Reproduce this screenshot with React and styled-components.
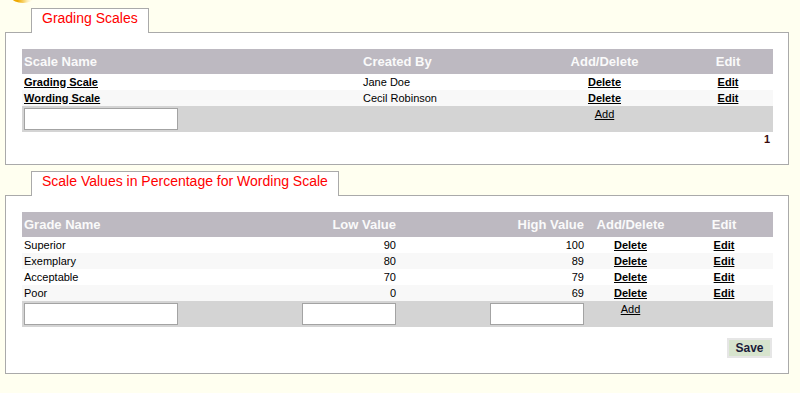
import styled, { createGlobalStyle } from 'styled-components';

const GlobalStyle = createGlobalStyle`
  body {
    margin: 0;
    background: #fffff0;
    font-family: "Liberation Sans", Arial, sans-serif;
  }
`

const Page = styled.div`
  padding: 0 11px 0 5px;
`

const TopStrip = styled.div`
  height: 8px;
  overflow: hidden;
  display: flex;
`

const Section = styled.section`
  margin-top: ${p => p.$gap || 0}px;
`

const TabRow = styled.div`
  display: flex;
  align-items: stretch;
  height: 25px;
`

const TabGap = styled.div`
  width: 26px;
  border-bottom: 1px solid #aaa;
  box-sizing: border-box;
`

const TabFill = styled.div`
  flex: 1;
  border-bottom: 1px solid #aaa;
  box-sizing: border-box;
`

const Tab = styled.div`
  background: #fff;
  border: 1px solid #aaa;
  border-bottom: none;
  padding: 1px 10px 0 10px;
  line-height: 16px;
  font-size: 14px;
  color: #f00;
  white-space: nowrap;
`

const PanelBody = styled.div`
  background: #fff;
  border: 1px solid #aaa;
  border-top: none;
  padding: 16px 15px ${p => p.$bottom}px 16px;
`

const Table = styled.table`
  width: 751px;
  table-layout: fixed;
  border-collapse: collapse;
  font-size: 11px;
  color: #000;
`

const HeadRow = styled.tr`
  background: #bdb9c1;
  height: 25px;
`

const HeadCell = styled.th`
  padding: 0 2px;
  font-size: 13px;
  font-weight: bold;
  color: #fafafa;
  text-align: ${p => p.$align || 'left'};
  vertical-align: middle;
  white-space: nowrap;
`

const Row = styled.tr`
  height: 16px;
  background: ${p => (p.$alt ? '#f8f8f8' : '#fff')};
`

const Cell = styled.td`
  padding: 0 2px;
  line-height: 13px;
  text-align: ${p => p.$align || 'left'};
  vertical-align: middle;
  white-space: nowrap;
`

const AddRow = styled.tr`
  height: 26px;
  background: #d4d4d4;
`

const AddCell = styled.td`
  padding: 2px;
  line-height: 13px;
  text-align: ${p => p.$align || 'left'};
  vertical-align: top;
`

const TextBox = styled.input`
  display: inline-block;
  box-sizing: border-box;
  width: ${p => p.$w}px;
  height: 22px;
  border: 1px solid #a3a3a3;
  background: #fff;
  margin: 0;
  padding: 0 3px;
  vertical-align: top;
`

const LinkText = styled.a`
  color: #000;
  text-decoration: underline;
  font-weight: ${p => (p.$plain ? 'normal' : 'bold')};
  cursor: pointer;
`

const Pager = styled.div`
  padding: 1px 3px 1px 0;
  line-height: 13px;
  font-size: 11px;
  font-weight: bold;
  color: #3a0a0a;
  text-align: right;
`

const ButtonRow = styled.div`
  display: flex;
  justify-content: flex-end;
  margin-top: 11px;
  padding-right: 1px;
`

const SaveButton = styled.button`
  box-sizing: border-box;
  height: 20px;
  width: 45px;
  background: #d7e4cd;
  border: 2px solid #e6e6e6;
  color: #1b1b3a;
  font-family: "Liberation Sans", Arial, sans-serif;
  font-size: 12px;
  font-weight: bold;
  padding: 0;
  cursor: pointer;
`

const scales = [
  { name: 'Grading Scale', by: 'Jane Doe' },
  { name: 'Wording Scale', by: 'Cecil Robinson' },
]

const grades = [
  { name: 'Superior', low: 90, high: 100 },
  { name: 'Exemplary', low: 80, high: 89 },
  { name: 'Acceptable', low: 70, high: 79 },
  { name: 'Poor', low: 0, high: 69 },
]

const Logo = () => (
  <svg width="40" height="8" viewBox="0 0 40 8">
    <defs>
      <linearGradient id="lg" x1="0" y1="0" x2="1" y2="0">
        <stop offset="0.25" stopColor="#efa900" />
        <stop offset="0.6" stopColor="#f9de8a" />
        <stop offset="1" stopColor="#fffff0" stopOpacity="0" />
      </linearGradient>
    </defs>
    <ellipse cx="18" cy="-2" rx="11" ry="5" fill="url(#lg)" />
  </svg>
)

const App = () => {
  return (
    <Page>
      <GlobalStyle />
      <TopStrip>
        <Logo />
      </TopStrip>

      <Section>
        <TabRow>
          <TabGap />
          <Tab>Grading Scales</Tab>
          <TabFill />
        </TabRow>
        <PanelBody $bottom={17}>
          <Table>
            <colgroup>
              <col style={{ width: 339 }} />
              <col style={{ width: 165 }} />
              <col style={{ width: 157 }} />
              <col style={{ width: 90 }} />
            </colgroup>
            <thead>
              <HeadRow>
                <HeadCell>Scale Name</HeadCell>
                <HeadCell>Created By</HeadCell>
                <HeadCell $align="center">Add/Delete</HeadCell>
                <HeadCell $align="center">Edit</HeadCell>
              </HeadRow>
            </thead>
            <tbody>
              {scales.map((s, i) => (
                <Row key={s.name} $alt={i % 2 === 1}>
                  <Cell><LinkText>{s.name}</LinkText></Cell>
                  <Cell>{s.by}</Cell>
                  <Cell $align="center"><LinkText>Delete</LinkText></Cell>
                  <Cell $align="center"><LinkText>Edit</LinkText></Cell>
                </Row>
              ))}
              <AddRow>
                <AddCell><TextBox $w={154} /></AddCell>
                <AddCell />
                <AddCell $align="center"><LinkText $plain>Add</LinkText></AddCell>
                <AddCell />
              </AddRow>
            </tbody>
          </Table>
          <Pager>1</Pager>
        </PanelBody>
      </Section>

      <Section $gap={6}>
        <TabRow>
          <TabGap />
          <Tab>Scale Values in Percentage for Wording Scale</Tab>
          <TabFill />
        </TabRow>
        <PanelBody $bottom={15}>
          <Table>
            <colgroup>
              <col style={{ width: 178 }} />
              <col style={{ width: 198 }} />
              <col style={{ width: 188 }} />
              <col style={{ width: 89 }} />
              <col style={{ width: 98 }} />
            </colgroup>
            <thead>
              <HeadRow>
                <HeadCell>Grade Name</HeadCell>
                <HeadCell $align="right">Low Value</HeadCell>
                <HeadCell $align="right">High Value</HeadCell>
                <HeadCell $align="center">Add/Delete</HeadCell>
                <HeadCell $align="center">Edit</HeadCell>
              </HeadRow>
            </thead>
            <tbody>
              {grades.map((g, i) => (
                <Row key={g.name} $alt={i % 2 === 1}>
                  <Cell>{g.name}</Cell>
                  <Cell $align="right">{g.low}</Cell>
                  <Cell $align="right">{g.high}</Cell>
                  <Cell $align="center"><LinkText>Delete</LinkText></Cell>
                  <Cell $align="center"><LinkText>Edit</LinkText></Cell>
                </Row>
              ))}
              <AddRow>
                <AddCell><TextBox $w={154} /></AddCell>
                <AddCell $align="right"><TextBox $w={94} /></AddCell>
                <AddCell $align="right"><TextBox $w={94} /></AddCell>
                <AddCell $align="center"><LinkText $plain>Add</LinkText></AddCell>
                <AddCell />
              </AddRow>
            </tbody>
          </Table>
          <ButtonRow>
            <SaveButton>Save</SaveButton>
          </ButtonRow>
        </PanelBody>
      </Section>
    </Page>
  )
}

export default App
